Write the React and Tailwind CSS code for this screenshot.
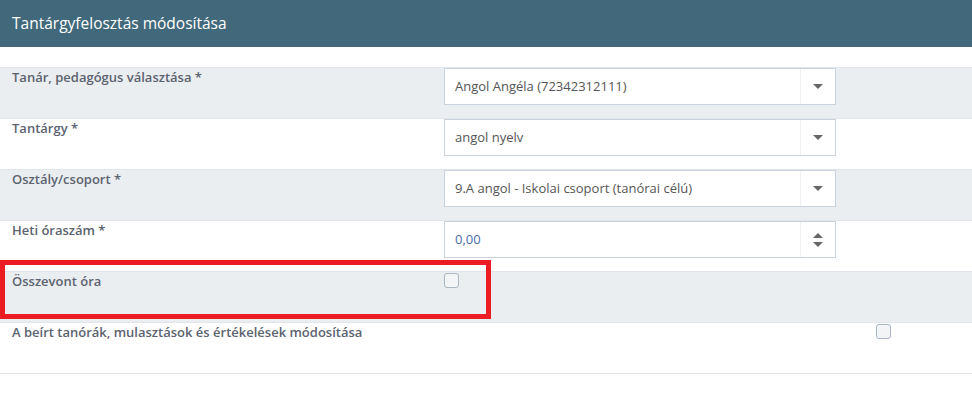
import { useState } from 'react';

const font = { fontFamily: '"Open Sans", "Noto Sans", sans-serif' };

function Caret({ up = false }) {
  return (
    <svg width="10" height="5" viewBox="0 0 10 5" className="block">
      {up ? <path d="M0 5 L5 0 L10 5 Z" fill="#666" /> : <path d="M0 0 L10 0 L5 5 Z" fill="#666" />}
    </svg>
  );
}

function SelectBox({ value }) {
  return (
    <div className="flex h-[37px] w-[392px] items-stretch border border-[#c9d3de] bg-white">
      <div className="flex flex-1 items-center pl-[10px] text-[13px] text-[#555]">{value}</div>
      <div className="flex w-[35px] items-center justify-center border-l border-[#eef1f4]">
        <Caret />
      </div>
    </div>
  );
}

function NumberBox({ value }) {
  return (
    <div className="flex h-[37px] w-[392px] items-stretch border border-[#c9d3de] bg-white">
      <div className="flex flex-1 items-center pl-[10px] text-[13px] text-[#4a6ea8]">{value}</div>
      <div className="flex w-[35px] flex-col items-center justify-center gap-[4px] border-l border-[#eef1f4]">
        <Caret up />
        <Caret />
      </div>
    </div>
  );
}

function Check() {
  const [on, setOn] = useState(false);
  return (
    <button
      onClick={() => setOn(!on)}
      className="mt-[1px] block h-[15px] w-[15px] rounded-[3px] border border-[#aab7c4] bg-[#f3f4f5]"
    />
  );
}

function Row({ label, gray, children, wide }) {
  return (
    <div className={`flex h-[51px] border-t border-[#e2e6ea] ${gray ? 'bg-[#ebeef1]' : 'bg-white'}`}>
      <div className={`${wide ? 'w-[876px]' : 'w-[444px]'} pl-3 text-[13px] leading-[18px] font-semibold text-[#5c6370]`}>{label}</div>
      <div>{children}</div>
    </div>
  );
}

export default function App() {
  return (
    <div className="relative min-h-[393px] w-[972px] bg-white" style={font}>
      <div className="flex h-[47px] items-center bg-[#41697b] pl-3 text-[15.5px] text-white">
        Tantárgyfelosztás módosítása
      </div>
      <div className="pt-5">
        <Row label="Tanár, pedagógus választása *" gray>
          <SelectBox value="Angol Angéla (72342312111)" />
        </Row>
        <Row label="Tantárgy *">
          <SelectBox value="angol nyelv" />
        </Row>
        <Row label="Osztály/csoport *" gray>
          <SelectBox value="9.A angol - Iskolai csoport (tanórai célú)" />
        </Row>
        <Row label="Heti óraszám *">
          <NumberBox value="0,00" />
        </Row>
        <Row label="Összevont óra" gray>
          <Check />
        </Row>
        <Row label="A beírt tanórák, mulasztások és értékelések módosítása" wide>
          <Check />
        </Row>
        <div className="border-t border-[#e2e6ea]" />
      </div>
      <div className="pointer-events-none absolute left-0 top-[260px] h-[59px] w-[491px] border-[5px] border-[#ec1c24]" />
    </div>
  );
}
